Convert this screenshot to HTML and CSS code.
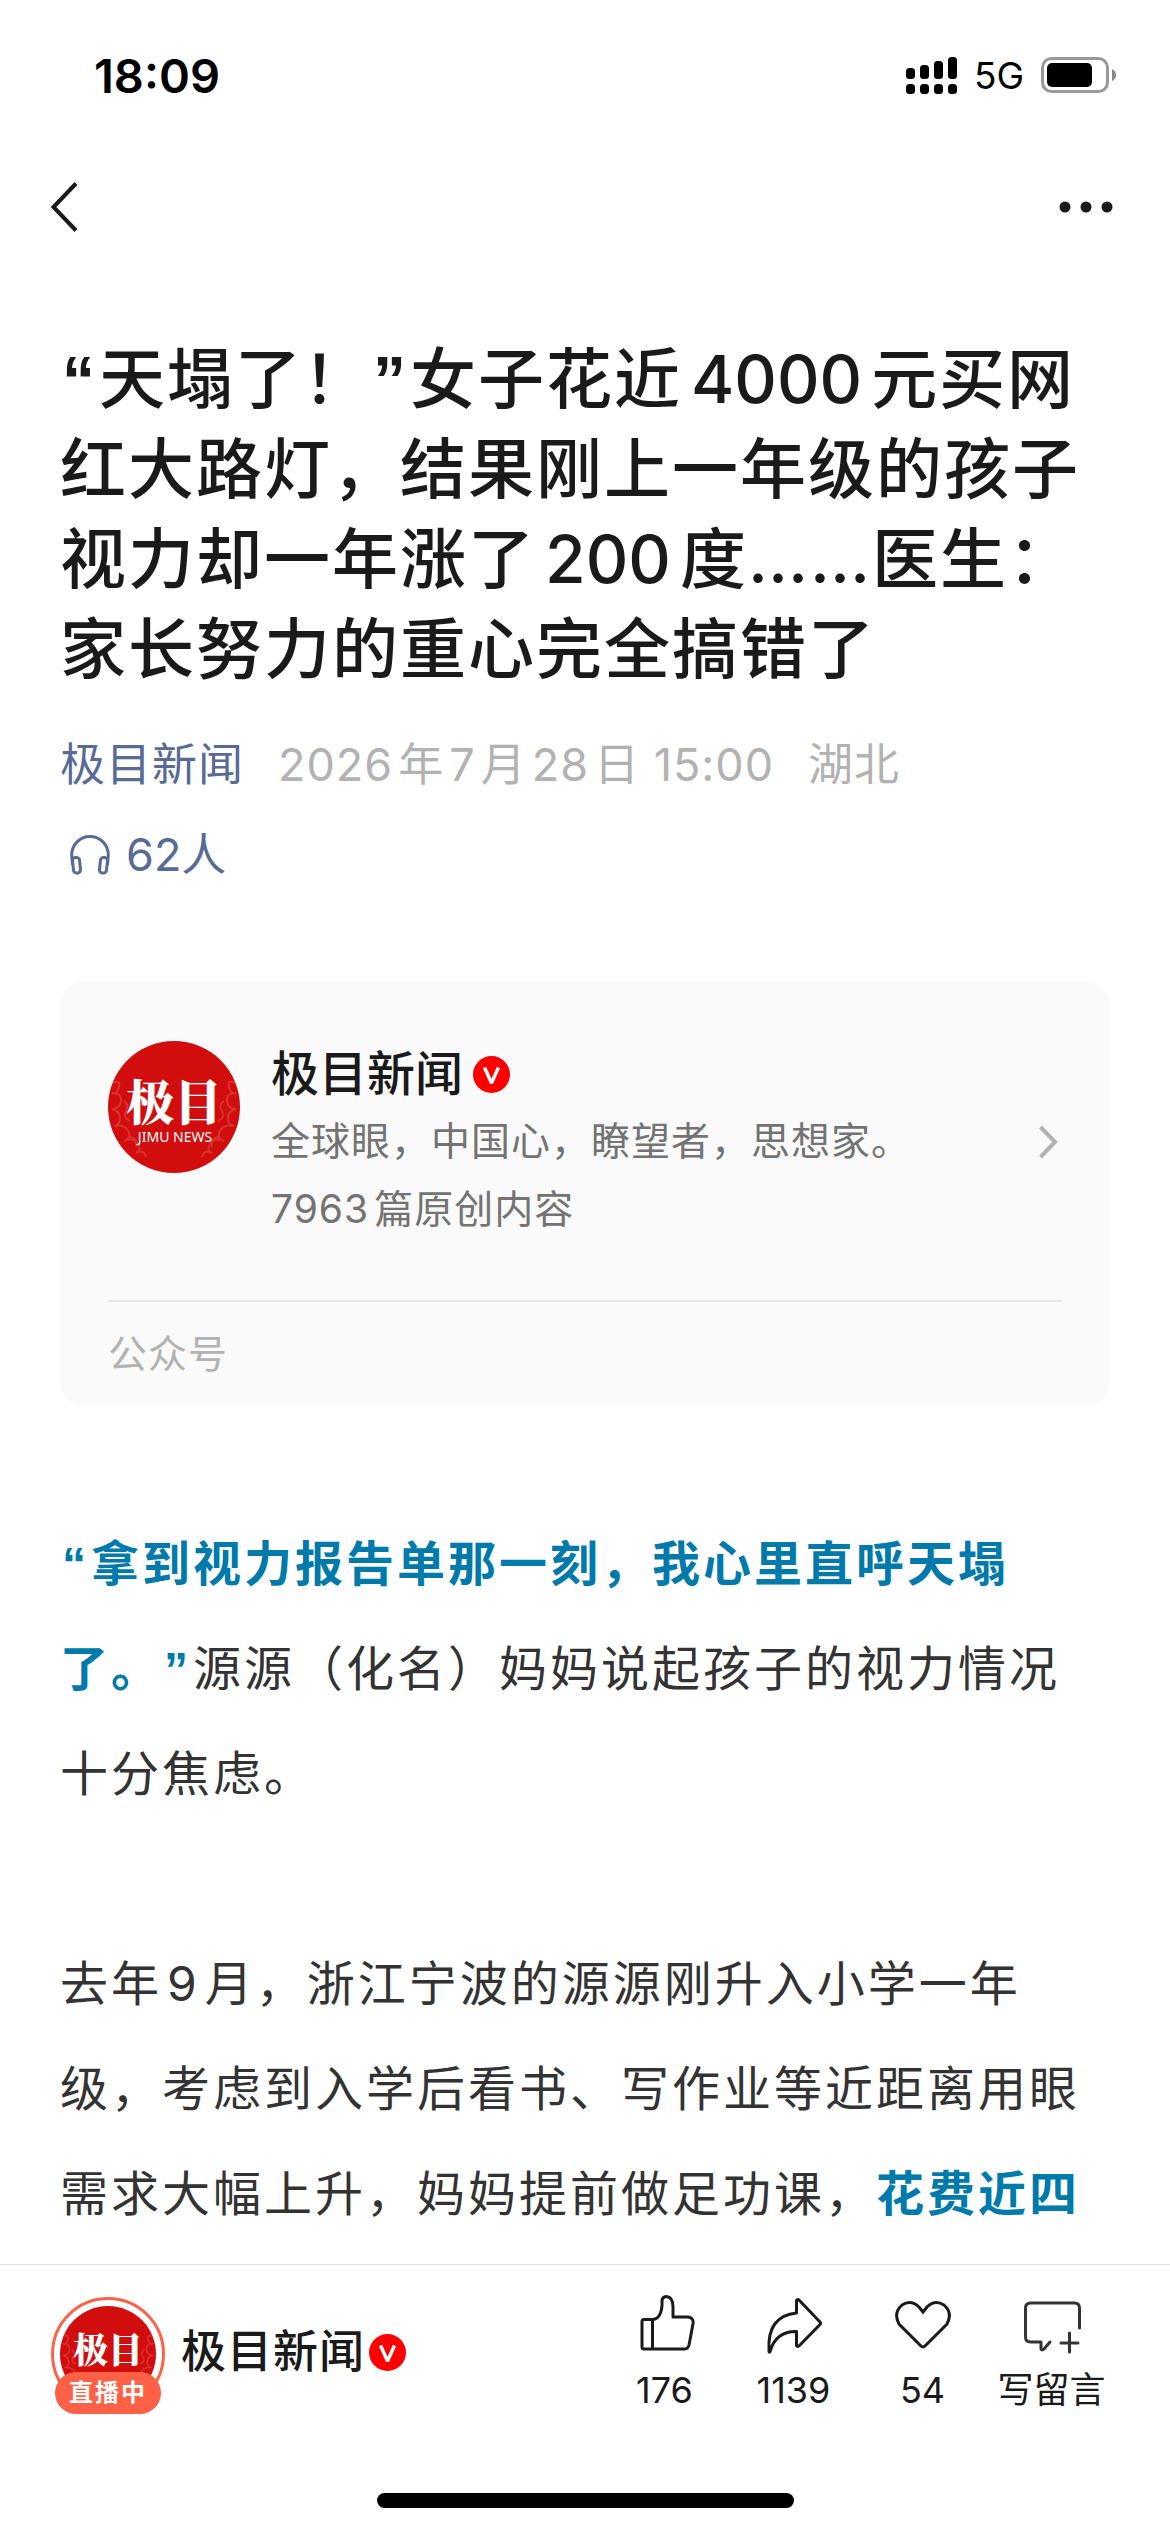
FILE: index.html
```html
<!DOCTYPE html>
<html lang="zh-CN">
<head>
<meta charset="utf-8">
<meta name="viewport" content="width=device-width">
<title>极目新闻</title>
<link rel="stylesheet" href="styles.css">
</head>
<body>
<svg class="defs" aria-hidden="true">
  <symbol id="logo" viewBox="0 0 132 132">
    <circle cx="66" cy="66" r="66" fill="#d10d0e"/>
    <g fill="none" stroke="#e04a48" stroke-width="2" opacity=".6">
      <path d="M5 42q8-4 6 4t-7 6q10 0 9 8t-9 8q8 2 8 9t-6 8q10-2 14 5t-4 10q10-4 14 3t-2 9q8-4 10 4"/>
      <path d="M127 42q-8-4-6 4t7 6q-10 0-9 8t9 8q-8 2-8 9t6 8q-10-2-14 5t4 10q-10-4-14 3t2 9q-8-4-10 4"/>
      <path d="M16 60q6 4 2 10t4 10M116 60q-6 4-2 10t-4 10M22 96q8 2 6 10M110 96q-8 2-6 10"/>
    </g>
  </symbol>
  <symbol id="verified" viewBox="0 0 37 37">
    <circle cx="18.500" cy="18.500" r="18.500" fill="#f00"/>
    <path d="M11.500 11.500L18.500 27L25.500 11.500" fill="none" stroke="#fff" stroke-width="3.500" stroke-linejoin="bevel"/>
  </symbol>
</svg>

<header class="top">
  <div class="status">
    <time class="clock">18:09</time>
    <div class="status-right">
      <svg width="51" height="37" viewBox="0 0 51 37" aria-hidden="true">
        <rect x="0" y="11" width="9" height="11" rx="3.500"/>
        <rect x="14" y="8" width="9" height="14" rx="3.500"/>
        <rect x="28" y="4" width="9" height="18" rx="3.500"/>
        <rect x="42" y="0" width="9" height="22" rx="3.500"/>
        <rect x="0" y="27" width="9" height="10" rx="3.500"/>
        <rect x="14" y="27" width="9" height="10" rx="3.500"/>
        <rect x="28" y="27" width="9" height="10" rx="3.500"/>
        <rect x="42" y="27" width="9" height="10" rx="3.500"/>
      </svg>
      <span class="network">5G</span>
      <svg width="75" height="36" viewBox="0 0 75 36" aria-hidden="true">
        <rect x="1.500" y="1.500" width="65" height="33" rx="9" fill="none" stroke="#999" stroke-width="3"/>
        <rect x="6" y="6" width="45" height="24" rx="5"/>
        <path d="M71 12q4 2 4 6t-4 6z" fill="#888"/>
      </svg>
    </div>
  </div>
  <nav class="nav">
    <button class="icon-button" aria-label="返回">
      <svg width="30" height="52" viewBox="0 0 30 52"><path d="M26 2.500L3.500 26L26 49.500" fill="none" stroke="#1a1a1a" stroke-width="4"/></svg>
    </button>
    <button class="icon-button" aria-label="更多">
      <svg width="54" height="12" viewBox="0 0 54 12"><g fill="#1a1a1a"><circle cx="6" cy="6" r="5.500"/><circle cx="27" cy="6" r="5.500"/><circle cx="48" cy="6" r="5.500"/></g></svg>
    </button>
  </nav>
</header>

<main class="article">
  <h1 class="title"><span class="quote">“</span>天塌了！<span class="quote">”</span>女子花近<span class="num">4000</span>元买网红大路灯，结果刚上一年级的孩子视力却一年涨了<span class="num">200</span>度……医生：家长努力的重心完全搞错了</h1>
  <div class="meta">
    <a class="link" href="#account">极目新闻</a>
    <time><span class="num-start">2026</span>年<span class="num">7</span>月<span class="num">28</span>日 15:00</time>
    <span>湖北</span>
  </div>
  <a class="listen link" href="#listen">
    <svg width="42" height="40" viewBox="0 0 42 40" aria-hidden="true">
      <g fill="none" stroke="#576b95" stroke-width="3">
        <path d="M3.500 30L2.700 20a18.300 18.500 0 0 1 36.600 0L38.500 30"/>
        <rect x="4" y="22.500" width="7" height="15.500" rx="3" transform="rotate(-6 7.500 30)"/>
        <rect x="31" y="22.500" width="7" height="15.500" rx="3" transform="rotate(6 34.500 30)"/>
      </g>
    </svg>
    <span>62人</span>
  </a>

  <a class="card" id="account" href="#profile">
    <span class="card-main">
      <svg class="avatar" viewBox="0 0 132 132" aria-hidden="true">
        <use href="#logo"/>
        <text class="logo-cn" x="66" y="79" text-anchor="middle">极目</text>
        <text class="logo-en" x="67" y="101" text-anchor="middle">JIMU NEWS</text>
      </svg>
      <span class="card-text">
        <span class="card-name">极目新闻<svg class="badge-v" aria-hidden="true"><use href="#verified"/></svg></span>
        <span class="card-desc">全球眼，中国心，瞭望者，思想家。</span>
        <span class="card-desc"><span class="num-start">7963</span>篇原创内容</span>
      </span>
      <svg width="20" height="34" viewBox="0 0 20 34" aria-hidden="true"><path d="M2.500 2L17 17L2.500 32" fill="none" stroke="#b2b2b2" stroke-width="4"/></svg>
    </span>
    <span class="card-foot">公众号</span>
  </a>

  <div class="content">
    <p><strong><span class="quote">“</span>拿到视力报告单那一刻，我心里直呼天塌了。<span class="quote">”</span></strong>源源（化名）妈妈说起孩子的视力情况十分焦虑。</p>
    <p>去年<span class="num">9</span>月，浙江宁波的源源刚升入小学一年级，考虑到入学后看书、写作业等近距离用眼需求大幅上升，妈妈提前做足功课，<strong>花费近四</strong></p>
  </div>
</main>

<footer class="bar">
  <div class="bar-row">
    <a class="author" href="#account">
      <span class="live">
        <svg class="live-avatar" viewBox="0 0 132 132" aria-hidden="true">
          <use href="#logo"/>
          <text class="logo-cn" x="66" y="79" text-anchor="middle">极目</text>
        </svg>
        <span class="live-tag">直播中</span>
      </span>
      <span class="author-name">极目新闻<svg class="badge-v" aria-hidden="true"><use href="#verified"/></svg></span>
    </a>
    <div class="actions">
      <button class="action">
        <svg width="60" height="66" viewBox="-2 0 60 66" aria-hidden="true"><g fill="none" stroke="#1a1a1a" stroke-width="3" stroke-linejoin="round">
          <path d="M5 32.500q0-2 2-2H16q8-1 9-14V12q0-4 4.500-4.500Q36 8 36 18V28H51q6 1 5 7L52 56q-1 4-4 4H7q-2 0-2-2z"/><path d="M15.500 31V60"/></g></svg>
        <span>176</span>
      </button>
      <button class="action">
        <svg width="60" height="66" viewBox="-1 0 60 66" aria-hidden="true"><path d="M31.500 24V11.500q1-2 3 0L55 33q1 1 0 2.500L34.500 56.500q-2 2-3 0V42.500Q11 42 5 62.500q-1 2-1-1Q2 27 31.500 24z" fill="none" stroke="#1a1a1a" stroke-width="3" stroke-linejoin="round"/></svg>
        <span>1139</span>
      </button>
      <button class="action">
        <svg width="60" height="66" viewBox="0 0 60 66" aria-hidden="true"><path d="M30 23L26 18Q18 10 9 16 0 24 6 35L28 57q2 2 4 0L54 35Q60 24 51 16 42 10 34 18z" fill="none" stroke="#1a1a1a" stroke-width="3"/></svg>
        <span>54</span>
      </button>
      <button class="action">
        <svg width="60" height="66" viewBox="0 0 60 66" aria-hidden="true"><g fill="none" stroke="#333" stroke-width="3" stroke-linecap="round" stroke-linejoin="round"><path d="M57.500 39V19q0-5-5-5H8.500q-5 0-5 5V48q0 5 5 5H19v7q1 2 3 0L28 53"/><path d="M39 54H56M47.500 44V63"/></g></svg>
        <span>写留言</span>
      </button>
    </div>
  </div>
  <div class="home-indicator"></div>
</footer>
</body>
</html>
```
FILE: styles.css
```css
* {
  box-sizing: border-box;
}

body {
  margin: 0;
  min-height: 100vh;
  display: flex;
  flex-direction: column;
  background: #fff;
  color: #1a1a1a;
  font-family: Inter, "Noto Sans CJK SC", sans-serif;
  text-spacing-trim: space-all;
}

a {
  color: inherit;
  text-decoration: none;
}

button {
  padding: 0;
  border: 0;
  background: none;
  color: inherit;
  font: inherit;
}

svg {
  display: block;
  flex: none;
}

.defs {
  position: absolute;
  width: 0;
  height: 0;
}

/* Status and navigation bars */

.status {
  display: flex;
  justify-content: space-between;
  align-items: center;
  height: 150px;
  padding: 0 54px 0 94px;
  color: #000;
}

.clock {
  font-size: 47px;
  font-weight: 600;
}

.status-right {
  display: flex;
  align-items: center;
  gap: 17px;
}

.network {
  font-size: 37px;
  font-weight: 400;
}

.nav {
  display: flex;
  justify-content: space-between;
  align-items: center;
  height: 114px;
  padding: 0 57px 0 50px;
}

.icon-button {
  display: flex;
}

/* Article */

.article {
  flex: 1;
  padding: 70px 60px 17px;
}

.title {
  margin: 0;
  font-size: 66px;
  font-weight: 500;
  line-height: 90px;
  letter-spacing: 2px;
}

.title .num {
  margin: 0 9px;
  letter-spacing: 0;
}

.quote {
  padding: 0 2px;
  font-family: "Liberation Sans", sans-serif;
  font-weight: 700;
  line-height: 1;
}

.num {
  margin: 0 5px;
}

.num-start {
  margin-right: 5px;
}

.meta {
  display: flex;
  gap: 34px;
  margin-top: 26px;
  font-size: 45px;
  line-height: 90px;
  letter-spacing: 1px;
  color: #b2b2b2;
}

.link {
  color: #576b95;
}

.listen {
  display: flex;
  align-items: center;
  gap: 15px;
  width: fit-content;
  padding-left: 9px;
  font-size: 45px;
  line-height: 90px;
}

.card {
  display: block;
  margin-top: 81px;
  padding: 60px 48px 0;
  border-radius: 24px;
  background: #fafafa;
}

.card-main {
  display: flex;
  align-items: flex-start;
  gap: 31px;
  padding-bottom: 57px;
  border-bottom: 2px solid #e8e8e8;
}

.card-main > svg:last-child {
  align-self: center;
  margin-right: 4px;
}

.avatar {
  width: 132px;
  height: 132px;
}

.logo-cn {
  font: 900 48px "Noto Serif CJK SC", "Noto Sans CJK SC", serif;
  fill: #fff;
}

.logo-en {
  font: 400 14px "Noto Sans", sans-serif;
  fill: #fff;
}

.card-text {
  flex: 1;
}

.card-name {
  display: flex;
  align-items: center;
  gap: 10px;
  font-size: 48px;
  font-weight: 500;
  line-height: 66px;
}

.badge-v {
  width: 37px;
  height: 37px;
}

.card-desc {
  display: block;
  font-size: 39px;
  line-height: 68px;
  letter-spacing: 1px;
  color: #737373;
}

.card-foot {
  display: block;
  font-size: 39px;
  line-height: 104px;
  letter-spacing: 1px;
  color: #b2b2b2;
}

.content {
  margin-top: 105px;
  color: #333;
  font-size: 48px;
  line-height: 105px;
  letter-spacing: 3px;
}

.content p {
  margin: 0 0 105px;
}

.content p:last-child {
  margin: 0;
}

.content strong {
  color: #007aaa;
  font-weight: 700;
}

/* Bottom bar */

.bar {
  border-top: 1px solid #e3e3e3;
  background: #fff;
}

.bar-row {
  display: flex;
  justify-content: space-between;
  padding: 24px 54px 0 51px;
}

.author {
  display: flex;
  align-items: flex-start;
  gap: 16px;
}

.live {
  position: relative;
  width: 114px;
  height: 114px;
  margin-top: 8px;
  padding: 6px;
  border: 3px solid #ff6146;
  border-radius: 50%;
}

.live-avatar {
  width: 96px;
  height: 96px;
}

.live-tag {
  position: absolute;
  left: 1px;
  bottom: -6px;
  width: 106px;
  border-radius: 21px;
  background: #ff6146;
  color: #fff;
  font-size: 24px;
  font-weight: 700;
  line-height: 42px;
  letter-spacing: 2px;
  text-align: center;
}

.author-name {
  display: flex;
  align-items: center;
  gap: 4px;
  margin-top: 30px;
  font-size: 45px;
  font-weight: 500;
  line-height: 66px;
  letter-spacing: 1px;
}

.actions {
  display: grid;
  grid-template-columns: repeat(4, 129px);
}

.action {
  display: flex;
  flex-direction: column;
  align-items: center;
  gap: 10px;
  font-size: 36px;
  line-height: 50px;
}

.home-indicator {
  width: 417px;
  max-width: 60%;
  height: 15px;
  margin: 78px auto 24px;
  border-radius: 8px;
  background: #000;
}
```
